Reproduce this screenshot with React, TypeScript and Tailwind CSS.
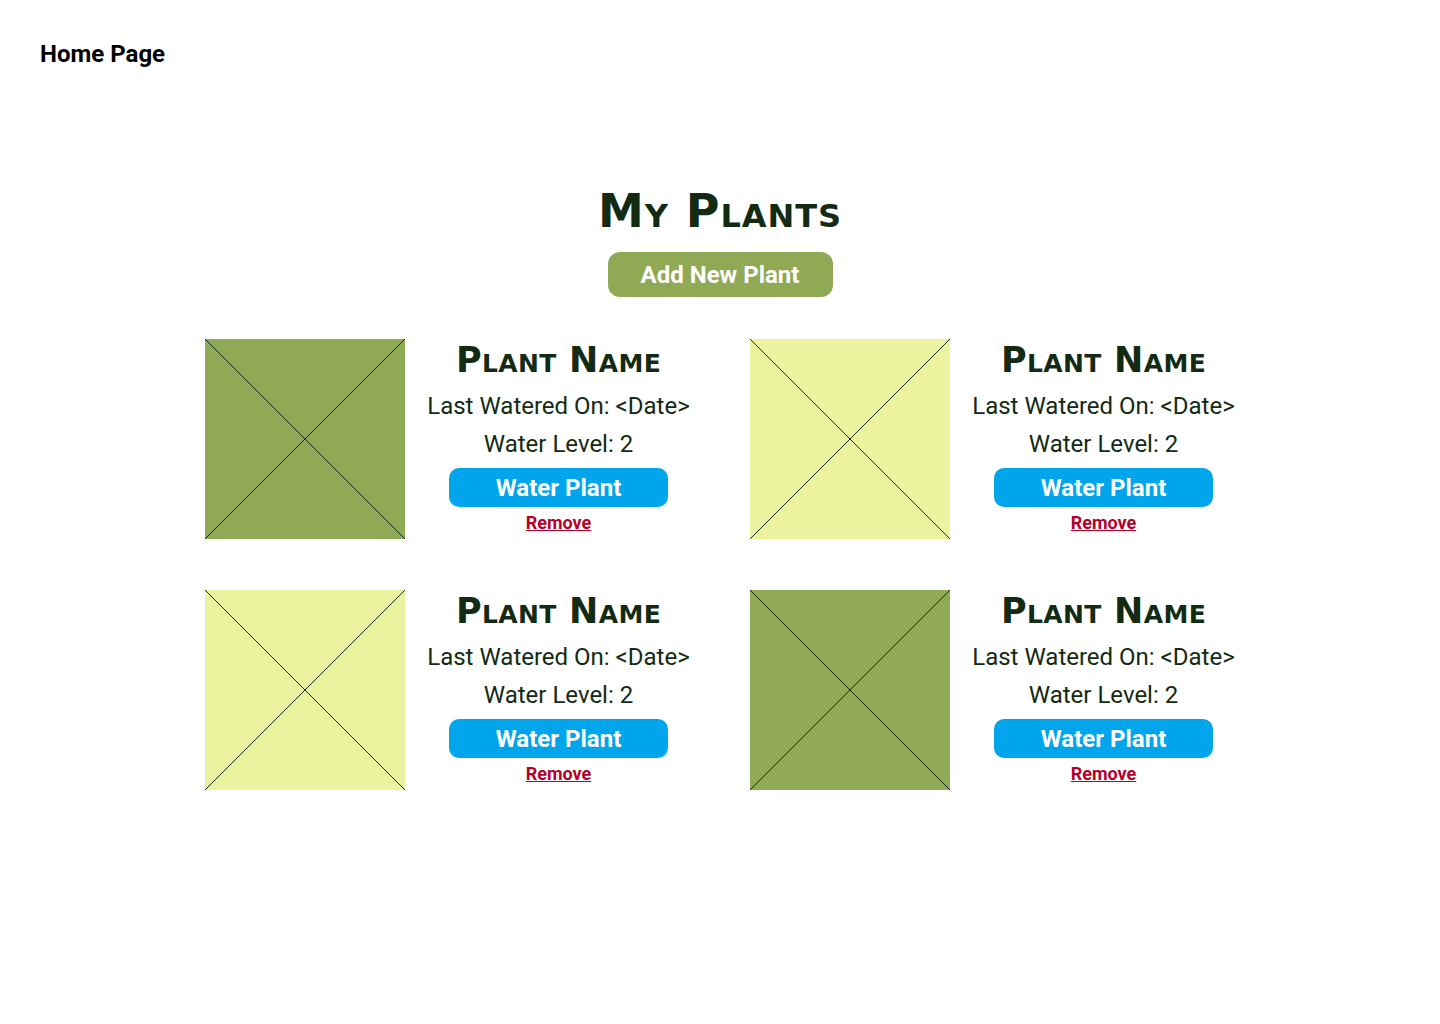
const plants = [
  { id: 1, color: "bg-[#90a955]" },
  { id: 2, color: "bg-[#ecf39e]" },
  { id: 3, color: "bg-[#ecf39e]" },
  { id: 4, color: "bg-[#90a955]" },
];

function Placeholder({ color }: { color: string }) {
  return (
    <div className={`w-[200px] h-[200px] shrink-0 ${color}`}>
      <svg className="w-full h-full" viewBox="0 0 200 200" preserveAspectRatio="none">
        <line x1="0" y1="0" x2="200" y2="200" stroke="#132a13" strokeWidth="1" />
        <line x1="200" y1="0" x2="0" y2="200" stroke="#132a13" strokeWidth="1" />
      </svg>
    </div>
  );
}

function PlantCard({ color }: { color: string }) {
  return (
    <div className="flex gap-[22px]">
      <Placeholder color={color} />
      <div className="w-[263px] flex flex-col items-center text-[#132a13]">
        <h2 className="font-['DejaVu_Sans'] font-bold text-[35px] leading-[44px] tracking-[0.01em] [font-variant:small-caps] mt-[-1px] whitespace-nowrap">
          Plant Name
        </h2>
        <p className="font-['Roboto'] text-[24px] leading-[28px] mt-[10px] whitespace-nowrap">Last Watered On: &lt;Date&gt;</p>
        <p className="font-['Roboto'] text-[24px] leading-[28px] mt-[10px]">Water Level: 2</p>
        <button className="mt-[10px] w-[219px] h-[39px] rounded-[10px] bg-[#00a5ec] text-white font-['Roboto'] font-bold text-[24px]">
          Water Plant
        </button>
        <button className="mt-[6px] font-['Roboto'] font-bold text-[18px] leading-[20px] text-[#b5002a] underline">
          Remove
        </button>
      </div>
    </div>
  );
}

export default function App() {
  return (
    <main className="min-h-screen bg-white">
      <header className="px-[40px] pt-[40px]">
        <h1 className="font-['Roboto'] font-bold text-[24px] leading-[28px] text-black">Home Page</h1>
      </header>

      <section className="flex flex-col items-center pt-[117px]">
        <h1 className="font-['DejaVu_Sans'] font-bold text-[46px] leading-[52px] tracking-[0.02em] text-[#132a13] [font-variant:small-caps]">
          My Plants
        </h1>
        <button className="mt-[15px] w-[225px] h-[45px] rounded-[12px] bg-[#90a955] text-white font-['Roboto'] font-bold text-[24px]">
          Add New Plant
        </button>
        <div className="mt-[42px] grid grid-cols-2 gap-x-[60px] gap-y-[51px]">
          {plants.map((p) => (
            <PlantCard key={p.id} color={p.color} />
          ))}
        </div>
      </section>
    </main>
  );
}
